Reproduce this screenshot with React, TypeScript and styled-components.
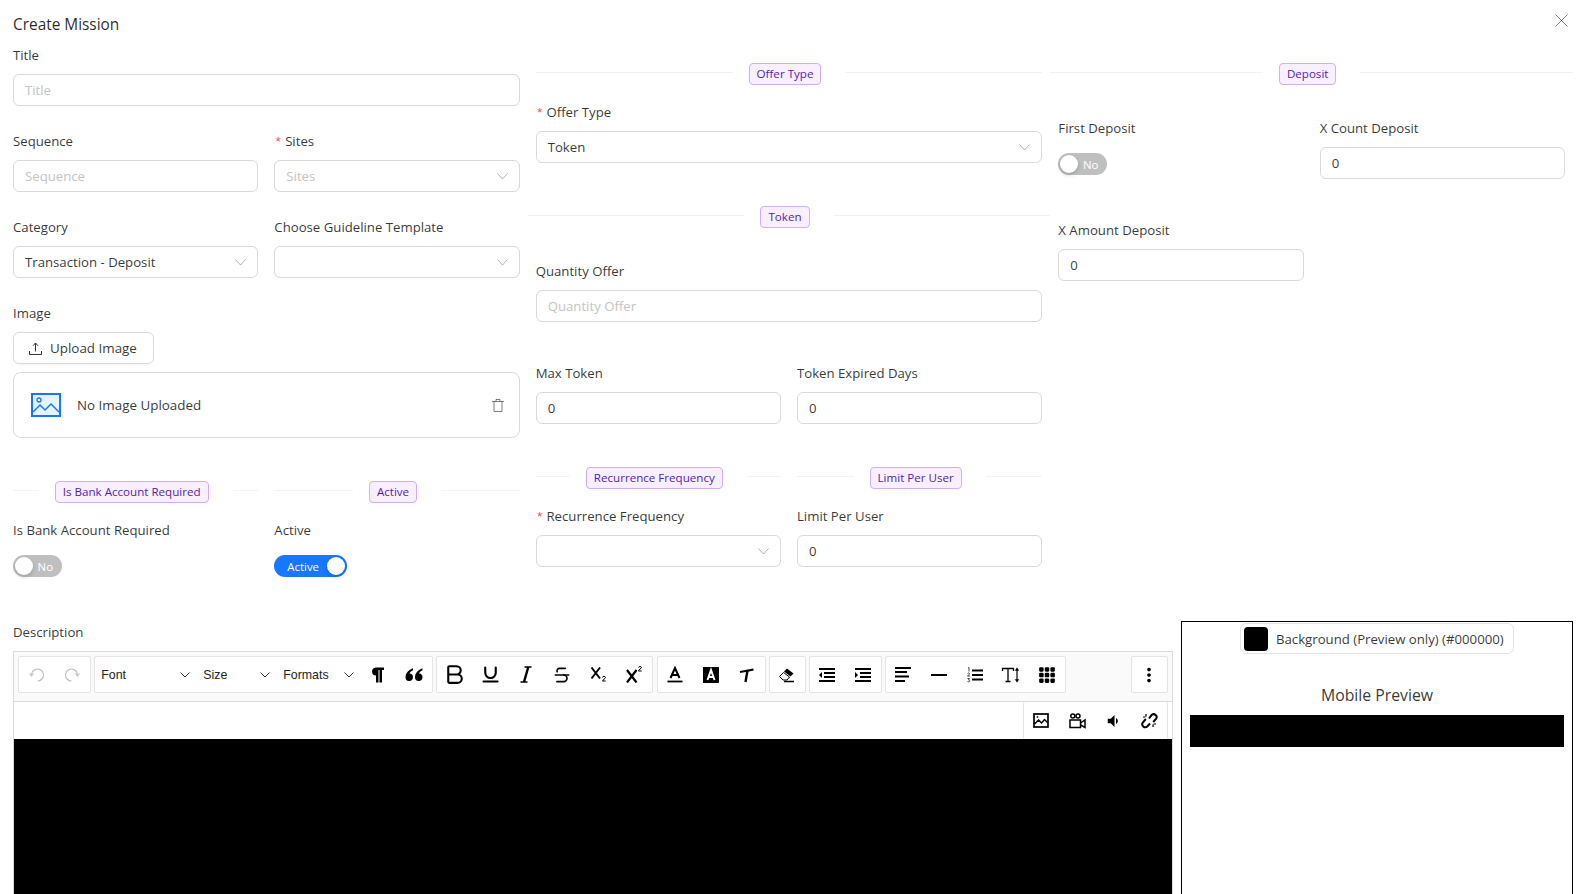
import React from "react";
import styled, { createGlobalStyle } from "styled-components";
import { Bold, Strikethrough, Underline } from "lucide-react";
import { BsGrid3X3GapFill } from "react-icons/bs";
import { MdMoreVert, MdVolumeDown } from "react-icons/md";

const GlobalStyle = createGlobalStyle`
    html, body {
        margin: 0;
        height: 100%;
        overflow: hidden;
        background: #fff;
    }
    * {
        box-sizing: border-box;
    }
`;

const FONT = `"Open Sans", "Noto Sans", sans-serif`;

const Modal = styled.div`
    position: relative;
    height: 100vh;
    padding: 0 17px 0 13px;
    overflow: hidden;
    font-family: ${FONT};
    font-size: 13.2px;
    color: rgba(0, 0, 0, 0.8);
`;

const ModalTitle = styled.div`
    height: 44px;
    padding-top: 13px;
    font-size: 15.4px;
    line-height: 23px;
    font-weight: 500;
    color: rgba(0, 0, 0, 0.85);
`;

const CloseButton = styled.button`
    position: absolute;
    top: 14px;
    right: 14px;
    width: 13px;
    height: 13px;
    padding: 0;
    border: 0;
    background: none;
    display: flex;
    color: rgba(0, 0, 0, 0.5);
`;

const TopGrid = styled.div`
    display: grid;
    grid-template-columns: repeat(3, 1fr);
    margin: 0 -8px;
`;

const Column = styled.div`
    display: flex;
    flex-direction: column;
    padding: 0 8px;
    min-width: 0;
`;

const HalfRow = styled.div<{ $top?: number }>`
    display: grid;
    grid-template-columns: repeat(2, 1fr);
    column-gap: 16px;
    margin-top: ${(p) => p.$top ?? 0}px;
`;

const Field = styled.div<{ $top?: number }>`
    display: flex;
    flex-direction: column;
    margin-top: ${(p) => p.$top ?? 0}px;
    margin-bottom: 24px;
    min-width: 0;
`;

const Label = styled.label`
    display: block;
    height: 22px;
    line-height: 22px;
    margin-bottom: 8px;
    white-space: nowrap;
`;

const Required = styled.span`
    color: #ff4d4f;
    margin-right: 3px;
    font-family: "Liberation Mono", monospace;
    font-size: 13px;
`;

const Input = styled.input`
    display: block;
    width: 100%;
    height: 32px;
    padding: 0 11px;
    border: 1px solid #d9d9d9;
    border-radius: 6px;
    outline: none;
    background: #fff;
    font-family: ${FONT};
    font-size: 13.2px;
    color: rgba(0, 0, 0, 0.8);

    &::placeholder {
        color: #c4c4c4;
    }
`;

const SelectBox = styled.div`
    display: flex;
    align-items: center;
    justify-content: space-between;
    height: 32px;
    padding: 0 11px;
    border: 1px solid #d9d9d9;
    border-radius: 6px;
    background: #fff;
`;

const SelectHint = styled.span`
    color: #c4c4c4;
`;

const ChevronWrap = styled.svg`
    width: 11px;
    height: 7px;
    flex: none;
    stroke: rgba(0, 0, 0, 0.3);
    fill: none;
`;

const Chevron = () => (
    <ChevronWrap viewBox="0 0 11 7">
        <path d="M.5.5l5 5.5 5-5.5" />
    </ChevronWrap>
);

const DividerRow = styled.div<{ $wide?: boolean }>`
    display: flex;
    height: 25px;
    margin: 16px ${(p) => (p.$wide ? "-8px" : "0")};
`;

const DividerLine = styled.div`
    flex: 1;
    height: 1px;
    margin-top: 12px;
    background: #f2f2f2;
`;

const Tag = styled.span`
    height: 22px;
    margin: 3px 24px 0 16px;
    padding: 0 7px;
    border: 1px solid #d3adf7;
    border-radius: 4px;
    background: #f9f0ff;
    color: #531dab;
    font-size: 11.6px;
    line-height: 20px;
    white-space: nowrap;
`;

const UploadButton = styled.button`
    display: flex;
    align-items: center;
    gap: 8px;
    width: 141px;
    height: 32px;
    padding: 0 15px;
    border: 1px solid #d9d9d9;
    border-radius: 6px;
    background: #fff;
    font-family: ${FONT};
    font-size: 13.4px;
    color: rgba(0, 0, 0, 0.8);
    white-space: nowrap;
    box-shadow: 0 2px 0 rgba(0, 0, 0, 0.02);
`;

const UploadItem = styled.div`
    display: flex;
    align-items: center;
    height: 66px;
    margin-top: 8px;
    padding: 0 15px 0 17px;
    border: 1px solid #d9d9d9;
    border-radius: 8px;
`;

const UploadText = styled.span`
    flex: 1;
    margin-left: 16px;
    font-size: 13.4px;
`;

const SwitchTrack = styled.div<{ $on?: boolean }>`
    position: relative;
    display: flex;
    align-items: center;
    justify-content: ${(p) => (p.$on ? "flex-start" : "flex-end")};
    width: ${(p) => (p.$on ? 73 : 49)}px;
    height: 22px;
    margin: 6px 0 4px;
    padding: ${(p) => (p.$on ? "0 0 0 13px" : "0 9px 0 0")};
    border-radius: 11px;
    background: ${(p) => (p.$on ? "#1677ff" : "#bfbfbf")};
    color: #fff;
    font-size: 11.4px;
`;

const SwitchKnob = styled.span<{ $on?: boolean }>`
    position: absolute;
    top: 2px;
    ${(p) => (p.$on ? "right: 2px;" : "left: 2px;")}
    width: 18px;
    height: 18px;
    border-radius: 50%;
    background: #fff;
    box-shadow: 0 2px 4px rgba(0, 35, 11, 0.2);
`;

const BottomGrid = styled.div`
    display: grid;
    grid-template-columns: 3fr 1fr;
    margin: 16px -8px 0;
`;

const Editor = styled.div`
    border: 1px solid #dadada;
    border-bottom: 0;
`;

const ToolbarRow = styled.div`
    display: flex;
    height: 50px;
    padding: 4px 4px 0 4px;
    background: #fafafa;
    border-bottom: 1px solid #dadada;
`;

const SecondRow = styled.div`
    display: flex;
    justify-content: flex-end;
    height: 37px;
    padding-right: 4px;
    background: #fff;
`;

const ToolGroup = styled.div<{ $end?: boolean; $flat?: boolean }>`
    display: flex;
    height: 37px;
    margin-right: ${(p) => (p.$end ? 0 : 3.2)}px;
    margin-left: ${(p) => (p.$end ? "auto" : 0)};
    border: 1px solid #e4e4e4;
    border-top: ${(p) => (p.$flat ? 0 : "1px solid #e4e4e4")};
    border-bottom: ${(p) => (p.$flat ? 0 : "1px solid #e4e4e4")};
    border-radius: 2px;
    background: #fff;

    & > *:first-child {
        margin-left: -1px;
    }
`;

const ToolButton = styled.button<{ $muted?: boolean }>`
    display: flex;
    align-items: center;
    justify-content: center;
    width: 36px;
    padding: 0;
    border: 0;
    background: none;
    color: ${(p) => (p.$muted ? "#bdbdbd" : "#000")};
`;

const ToolSelect = styled.div<{ $w: number }>`
    display: flex;
    align-items: center;
    justify-content: space-between;
    width: ${(p) => p.$w}px;
    padding: 0 6px 0 7px;
    font-family: "Liberation Sans", Arial, sans-serif;
    font-size: 12.4px;
    color: #222;
`;

const SmallChevron = styled.svg`
    width: 10px;
    height: 6px;
    fill: none;
    stroke: #333;
`;

const BlackCanvas = styled.div`
    height: 400px;
    background: #000;
`;

const PreviewPanel = styled.div`
    height: 400px;
    padding: 1px 8px 0;
    border: 1px solid #000;
`;

const ColorPicker = styled.div`
    display: flex;
    align-items: center;
    width: 274px;
    height: 31px;
    margin: 0 auto;
    padding: 0 8px 0 3px;
    border: 1px solid #e4e4e4;
    border-radius: 6px;
`;

const Swatch = styled.span`
    width: 24px;
    height: 24px;
    border-radius: 4px;
    background: #000;
`;

const PickerText = styled.span`
    margin-left: 8px;
    white-space: nowrap;
`;

const PreviewTitle = styled.div`
    margin-top: 29px;
    height: 24px;
    line-height: 24px;
    text-align: center;
    font-size: 15.8px;
    font-weight: 500;
    color: rgba(0, 0, 0, 0.8);
`;

const PreviewBar = styled.div`
    height: 32px;
    margin-top: 8px;
    background: #000;
`;

const UndoIcon = ({ flip }: { flip?: boolean }) => (
    <svg width="17" height="17" viewBox="0 0 17 17" fill="none" stroke="currentColor" strokeWidth="1.1"
        transform={flip ? "scale(-1 1)" : undefined}>
        <path d="M9.5 15a6 6 0 1 0-6-6" />
        <path d="M1.5 7.5l2 2.3 2-2.3" />
    </svg>
);

const ParagraphIcon = () => (
    <svg width="12" height="16" viewBox="0 0 12 16" fill="#000">
        <path d="M0 4.500C0 2 2 .5 4.500.5H12V3h-2v12.500H7.500V3h-1v12.500H4V8.500C1.500 8.500 0 7 0 4.500z" />
    </svg>
);

const QuoteIcon = () => (
    <svg width="18" height="15" viewBox="0 0 17 14" fill="#000">
        <path d="M7.500 1C3.500 2.500.5 5.500.5 9.500a3.500 3.500 0 1 0 3.800-3.400c.3-1.200 1.500-2.300 3.200-3z" />
        <path d="M16.500 1c-4 1.500-7 4.500-7 8.500a3.500 3.500 0 1 0 3.800-3.400c.3-1.200 1.500-2.300 3.200-3z" />
    </svg>
);

const ItalicIcon = () => (
    <svg width="12" height="17" viewBox="0 0 12 17" fill="none" stroke="#000">
        <path d="M4.500 1h7M.5 16h7" strokeWidth="1.400" />
        <path d="M8.300 1L4 16" strokeWidth="2.400" />
    </svg>
);

const SubIcon = () => (
    <svg width="17" height="17" viewBox="0 0 17 17" fill="none" stroke="#000">
        <path d="M1.500 1.500l8.500 11M10 1.500l-8.500 11" strokeWidth="2" />
        <path d="M12.500 11.500c0-1.500 3-1.500 3 0 0 1-3 2.500-3 3.500h3.200" strokeWidth="1" />
    </svg>
);

const SupIcon = () => (
    <svg width="17" height="17" viewBox="0 0 17 17" fill="none" stroke="#000">
        <path d="M1 4l9.500 12.500M10.500 4L1 16.500" strokeWidth="2.200" />
        <path d="M12.500 1.500c0-1.200 3-1.200 3 0 0 1-3 2-3 3.500h3.200" strokeWidth="1" />
    </svg>
);

const ColorAIcon = () => (
    <svg width="16" height="17" viewBox="0 0 16 17" fill="none" stroke="#000" strokeWidth="2">
        <path d="M3.500 12l4.500-10 4.500 10M5 9h6" />
        <path d="M0.500 15.500h15" strokeWidth="1.800" />
    </svg>
);

const HighlightIcon = () => (
    <svg width="16" height="16" viewBox="0 0 16 16" fill="none">
        <rect width="16" height="16" fill="#000" />
        <path d="M4.500 13l3.500-10 3.500 10M5.500 10h5" stroke="#fff" strokeWidth="2" />
    </svg>
);

const SlantTIcon = () => (
    <svg width="16" height="16" viewBox="0 0 16 16" fill="none" stroke="#000">
        <path d="M1 5c3-.5 9-1.500 13.500-2.500" strokeWidth="2" />
        <path d="M8.500 3.500L6.500 15" strokeWidth="2.400" />
    </svg>
);

const EraserIcon = () => (
    <svg width="17" height="16" viewBox="0 0 17 16">
        <path d="M9 1.500l6.500 5-3 3L6 4.500z" fill="#000" />
        <path d="M5.500 5.500l6 4.500-2.500 3H5L1.500 9.500z" fill="#fff" stroke="#000" />
        <path d="M6 14.500h10" stroke="#000" strokeWidth="1.500" />
    </svg>
);

const OutdentIcon = () => (
    <svg width="16" height="14" viewBox="0 0 16 14" fill="#000">
        <rect width="16" height="2" />
        <rect x="5" y="4" width="11" height="2" />
        <rect x="5" y="8" width="11" height="2" />
        <rect y="12" width="16" height="2" />
        <path d="M3 4v6L0 7z" />
    </svg>
);

const IndentIcon = () => (
    <svg width="16" height="14" viewBox="0 0 16 14" fill="#000">
        <rect width="16" height="2" />
        <rect x="5" y="4" width="11" height="2" />
        <rect x="5" y="8" width="11" height="2" />
        <rect y="12" width="16" height="2" />
        <path d="M0 4v6l3-3z" />
    </svg>
);

const AlignLeftIcon = () => (
    <svg width="16" height="15" viewBox="0 0 16 15" fill="#000">
        <rect width="16" height="2" />
        <rect y="4" width="12" height="2" />
        <rect y="8.500" width="14" height="2" />
        <rect y="13" width="10" height="2" />
    </svg>
);

const RuleIcon = () => (
    <svg width="16" height="16" viewBox="0 0 16 16">
        <rect y="7" width="16" height="2" fill="#000" />
    </svg>
);

const NumberListIcon = () => (
    <svg width="16" height="16" viewBox="0 0 16 16">
        <rect x="5" y="2.500" width="11" height="2" fill="#000" />
        <rect x="5" y="7" width="11" height="2" fill="#000" />
        <rect x="5" y="11.500" width="11" height="2" fill="#000" />
        <path d="M1 1l1-.5V4.500M.5 6.500c1-1 2.500-.5 2 .5L.5 9h2.500M.5 11.500h2L1.500 13c1 0 1.500.5 1 1.500-.4.5-1.500.5-2 0"
            fill="none" stroke="#333" strokeWidth="0.900" />
    </svg>
);

const LineHeightIcon = () => (
    <svg width="20" height="16" viewBox="0 0 20 16" fill="none" stroke="#000">
        <path d="M1.500 4V1.500h11V4M7 1.500V14M4.500 14.500h5" strokeWidth="1.300" />
        <path d="M16 2v12" strokeWidth="1.200" />
        <path d="M14.300 3.500L16 .8l1.700 2.700zM14.300 12.500L16 15.200l1.700-2.700z" fill="#000" strokeWidth="0.500" />
    </svg>
);

const ImageIcon = () => (
    <svg width="16" height="15" viewBox="0 0 16 15" fill="none" stroke="#000">
        <rect x="1" y="1" width="14" height="13" strokeWidth="1.700" />
        <path d="M1.500 11l4-4 3 3 3-3.500 3 3" strokeWidth="1.500" />
        <circle cx="4.500" cy="4" r="0.600" />
    </svg>
);

const VideoIcon = () => (
    <svg width="17" height="16" viewBox="0 0 17 16" fill="none" stroke="#000" strokeWidth="1.500">
        <circle cx="3.800" cy="3" r="2" />
        <circle cx="9" cy="3" r="2" />
        <rect x="1" y="7" width="10.500" height="7.500" />
        <path d="M11.500 10l4.500-3v7.500L11.500 12" />
    </svg>
);

const BrokenLinkIcon = () => (
    <svg width="17" height="17" viewBox="0 0 17 17" fill="none" stroke="#000" strokeWidth="2">
        <path d="M8 6.500l2.800-3.700a3 3 0 0 1 4.400 3.900l-3 3.300" />
        <path d="M9 11.500l-2.800 3a3 3 0 0 1-4.400-4l3-3.500" />
        <path d="M5 2v2.500M2 5h2.500M12 12.500V15M12.500 12H15" strokeWidth="1.200" />
    </svg>
);

const UploadIcon = () => (
    <svg width="13" height="13" viewBox="0 0 13 13" fill="none" stroke="rgba(0,0,0,0.8)">
        <path d="M6.500 9.500V1.500M4 3.800l2.500-2.800 2.500 2.800" />
        <path d="M.5 9v3.500h12V9" />
    </svg>
);

const PictureIcon = () => (
    <svg width="30" height="24" viewBox="0 0 30 24">
        <rect x="1" y="1" width="28" height="22" fill="#e6f4ff" stroke="#1677ff" strokeWidth="2" />
        <circle cx="8" cy="7" r="2" fill="none" stroke="#1677ff" strokeWidth="1.300" />
        <path d="M2 19l7-7 5 5 6-6 8 8" fill="none" stroke="#1677ff" strokeWidth="1.500" />
    </svg>
);

const TrashIcon = () => (
    <svg width="12" height="13" viewBox="0 0 12 13" fill="none" stroke="rgba(0,0,0,0.5)">
        <path d="M0 2.500h12M4 2.500V.5h4v2M2 2.500v10h8v-10" />
    </svg>
);

const SectionDivider = ({ text, wide }: { text: string; wide?: boolean }) => (
    <DividerRow $wide={wide}>
        <DividerLine />
        <Tag>{text}</Tag>
        <DividerLine />
    </DividerRow>
);

const ToolSelectItem = ({ text, w }: { text: string; w: number }) => (
    <ToolSelect $w={w}>
        {text}
        <SmallChevron viewBox="0 0 10 6">
            <path d="M.5.5l4.500 4.500 4.500-4.500" />
        </SmallChevron>
    </ToolSelect>
);

const App = () => {
    return (
        <Modal>
            <GlobalStyle />
            <ModalTitle>Create Mission</ModalTitle>
            <CloseButton aria-label="Close">
                <svg width="13" height="13" viewBox="0 0 13 13" stroke="currentColor" fill="none">
                    <path d="M.5.5l12 12M12.500.5l-12 12" />
                </svg>
            </CloseButton>

            <TopGrid>
                <Column>
                    <Field>
                        <Label>Title</Label>
                        <Input placeholder="Title" />
                    </Field>
                    <HalfRow>
                        <Field>
                            <Label>Sequence</Label>
                            <Input placeholder="Sequence" />
                        </Field>
                        <Field>
                            <Label><Required>*</Required>Sites</Label>
                            <SelectBox><SelectHint>Sites</SelectHint><Chevron /></SelectBox>
                        </Field>
                        <Field>
                            <Label>Category</Label>
                            <SelectBox>Transaction - Deposit<Chevron /></SelectBox>
                        </Field>
                        <Field>
                            <Label>Choose Guideline Template</Label>
                            <SelectBox><span /><Chevron /></SelectBox>
                        </Field>
                    </HalfRow>
                    <Field>
                        <Label>Image</Label>
                        <UploadButton><UploadIcon />Upload Image</UploadButton>
                        <UploadItem>
                            <PictureIcon />
                            <UploadText>No Image Uploaded</UploadText>
                            <TrashIcon />
                        </UploadItem>
                    </Field>
                    <HalfRow>
                        <div>
                            <SectionDivider text="Is Bank Account Required" />
                            <Field>
                                <Label>Is Bank Account Required</Label>
                                <SwitchTrack>No<SwitchKnob /></SwitchTrack>
                            </Field>
                        </div>
                        <div>
                            <SectionDivider text="Active" />
                            <Field>
                                <Label>Active</Label>
                                <SwitchTrack $on>Active<SwitchKnob $on /></SwitchTrack>
                            </Field>
                        </div>
                    </HalfRow>
                </Column>

                <Column>
                    <SectionDivider text="Offer Type" />
                    <Field>
                        <Label><Required>*</Required>Offer Type</Label>
                        <SelectBox>Token<Chevron /></SelectBox>
                    </Field>
                    <SectionDivider text="Token" wide />
                    <Field $top={16}>
                        <Label>Quantity Offer</Label>
                        <Input placeholder="Quantity Offer" />
                    </Field>
                    <HalfRow $top={16}>
                        <Field>
                            <Label>Max Token</Label>
                            <Input defaultValue="0" />
                        </Field>
                        <Field>
                            <Label>Token Expired Days</Label>
                            <Input defaultValue="0" />
                        </Field>
                    </HalfRow>
                    <HalfRow>
                        <div>
                            <SectionDivider text="Recurrence Frequency" />
                            <Field>
                                <Label><Required>*</Required>Recurrence Frequency</Label>
                                <SelectBox><span /><Chevron /></SelectBox>
                            </Field>
                        </div>
                        <div>
                            <SectionDivider text="Limit Per User" />
                            <Field>
                                <Label>Limit Per User</Label>
                                <Input defaultValue="0" />
                            </Field>
                        </div>
                    </HalfRow>
                </Column>

                <Column>
                    <SectionDivider text="Deposit" wide />
                    <HalfRow $top={16}>
                        <Field>
                            <Label>First Deposit</Label>
                            <SwitchTrack>No<SwitchKnob /></SwitchTrack>
                        </Field>
                        <Field>
                            <Label>X Count Deposit</Label>
                            <Input defaultValue="0" />
                        </Field>
                    </HalfRow>
                    <HalfRow $top={16}>
                        <Field>
                            <Label>X Amount Deposit</Label>
                            <Input defaultValue="0" />
                        </Field>
                    </HalfRow>
                </Column>
            </TopGrid>

            <BottomGrid>
                <Column>
                    <Label>Description</Label>
                    <Editor>
                        <ToolbarRow>
                            <ToolGroup>
                                <ToolButton $muted><UndoIcon /></ToolButton>
                                <ToolButton $muted><UndoIcon flip /></ToolButton>
                            </ToolGroup>
                            <ToolGroup>
                                <ToolSelectItem text="Font" w={102} />
                                <ToolSelectItem text="Size" w={80} />
                                <ToolSelectItem text="Formats" w={84} />
                                <ToolButton><ParagraphIcon /></ToolButton>
                                <ToolButton><QuoteIcon /></ToolButton>
                            </ToolGroup>
                            <ToolGroup>
                                <ToolButton><Bold size={25} strokeWidth={2} /></ToolButton>
                                <ToolButton><Underline size={21} strokeWidth={2.4} /></ToolButton>
                                <ToolButton><ItalicIcon /></ToolButton>
                                <ToolButton><Strikethrough size={20} strokeWidth={2} /></ToolButton>
                                <ToolButton><SubIcon /></ToolButton>
                                <ToolButton><SupIcon /></ToolButton>
                            </ToolGroup>
                            <ToolGroup>
                                <ToolButton><ColorAIcon /></ToolButton>
                                <ToolButton><HighlightIcon /></ToolButton>
                                <ToolButton><SlantTIcon /></ToolButton>
                            </ToolGroup>
                            <ToolGroup>
                                <ToolButton><EraserIcon /></ToolButton>
                            </ToolGroup>
                            <ToolGroup>
                                <ToolButton><OutdentIcon /></ToolButton>
                                <ToolButton><IndentIcon /></ToolButton>
                            </ToolGroup>
                            <ToolGroup>
                                <ToolButton><AlignLeftIcon /></ToolButton>
                                <ToolButton><RuleIcon /></ToolButton>
                                <ToolButton><NumberListIcon /></ToolButton>
                                <ToolButton><LineHeightIcon /></ToolButton>
                                <ToolButton><BsGrid3X3GapFill size={18} /></ToolButton>
                            </ToolGroup>
                            <ToolGroup $end>
                                <ToolButton><MdMoreVert size={22} /></ToolButton>
                            </ToolGroup>
                        </ToolbarRow>
                        <SecondRow>
                            <ToolGroup $flat $end>
                                <ToolButton><ImageIcon /></ToolButton>
                                <ToolButton><VideoIcon /></ToolButton>
                                <ToolButton><MdVolumeDown size={18} /></ToolButton>
                                <ToolButton><BrokenLinkIcon /></ToolButton>
                            </ToolGroup>
                        </SecondRow>
                        <BlackCanvas />
                    </Editor>
                </Column>
                <PreviewPanel>
                    <ColorPicker>
                        <Swatch />
                        <PickerText>Background (Preview only) (#000000)</PickerText>
                    </ColorPicker>
                    <PreviewTitle>Mobile Preview</PreviewTitle>
                    <PreviewBar />
                </PreviewPanel>
            </BottomGrid>
        </Modal>
    );
};

export default App;
